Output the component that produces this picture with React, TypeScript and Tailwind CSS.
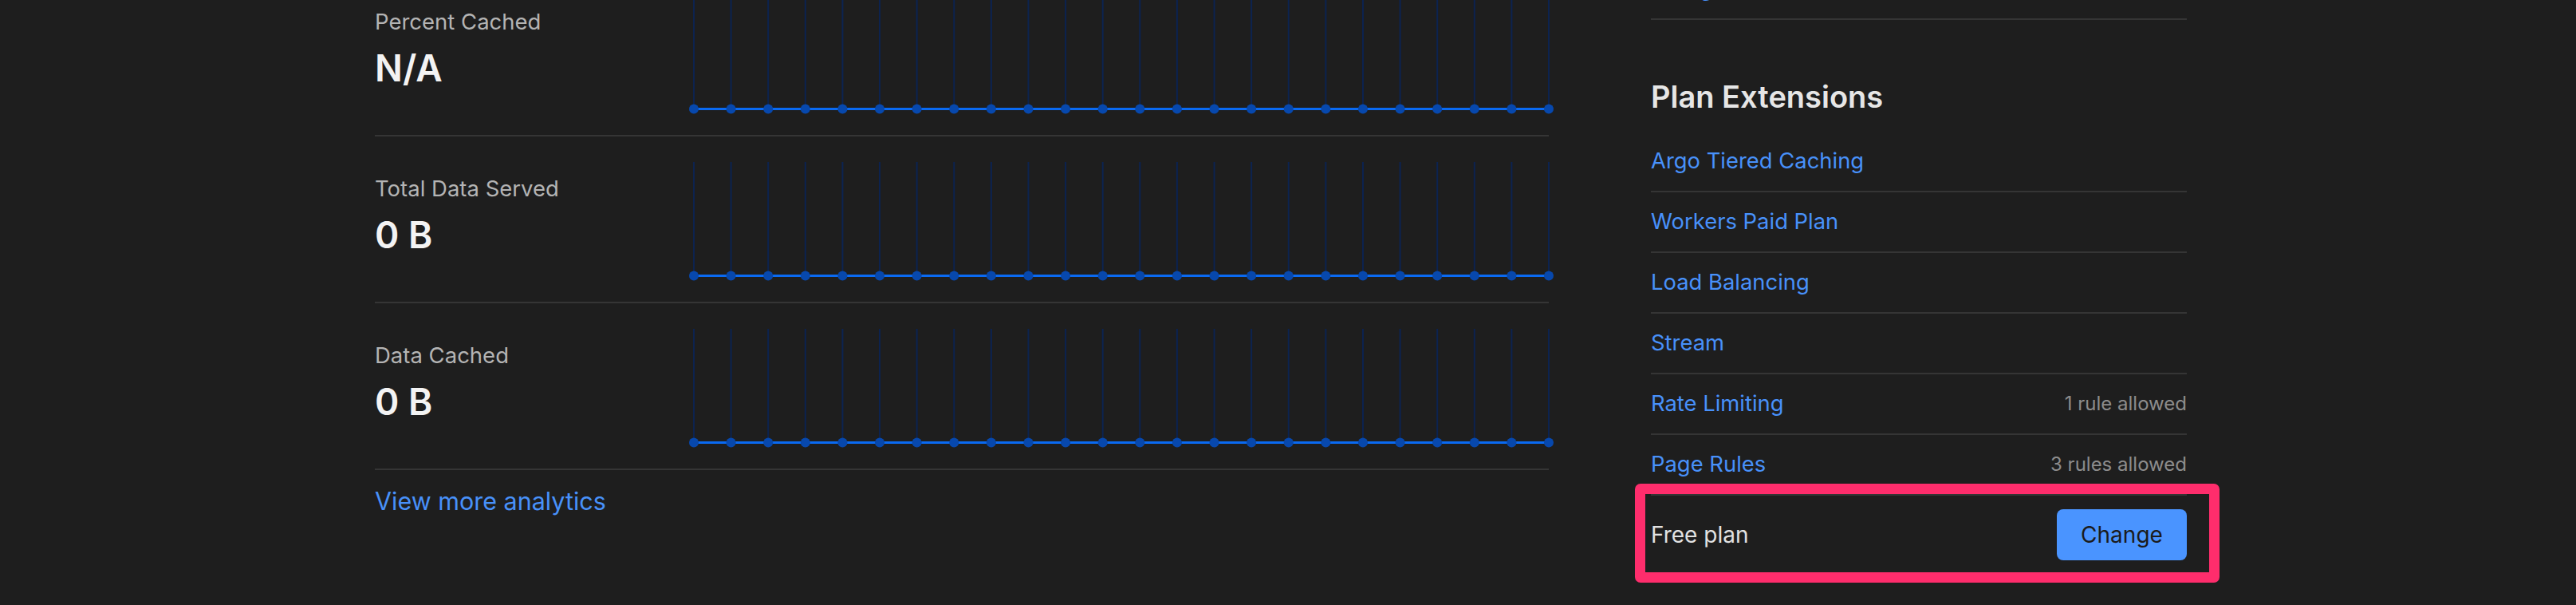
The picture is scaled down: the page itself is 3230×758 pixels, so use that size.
import React from "react";

const N = 24;
const CW = 1072;

function Chart() {
  const xs = Array.from({ length: N }, (_, i) => (i * CW) / (N - 1));
  return (
    <svg width={CW} height={150} className="block shrink-0 overflow-visible" style={{ overflow: "visible" }}>
      {xs.map((x, i) => (
        <line key={"v" + i} x1={x} y1={0} x2={x} y2={142.5} stroke="#0c2350" strokeWidth={2} />
      ))}
      <line x1={0} y1={142.5} x2={CW} y2={142.5} stroke="#0a6af2" strokeWidth={3} />
      {xs.map((x, i) => (
        <circle key={"d" + i} cx={x} cy={142.5} r={6} fill="#0748ad" />
      ))}
    </svg>
  );
}

function StatRow({ label, value }: { label: string; value: string }) {
  return (
    <div className="flex h-[209px] border-b-2 border-[#353535] pt-[32px]">
      <div className="w-[400px] shrink-0 pt-[13px]">
        <div className="text-[27.5px] leading-[40px] text-[#b4b4b4]">{label}</div>
        <div className="mt-[10px] text-[46px] leading-[56px] font-semibold text-[#f3f3f3]">{value}</div>
      </div>
      <Chart />
    </div>
  );
}

function LinkRow({ label, note }: { label: string; note?: string }) {
  return (
    <div className="flex h-[76px] items-center justify-between border-b-2 border-[#353535]">
      <span className="text-[27.4px] text-[#4891fa]">{label}</span>
      {note && <span className="text-[24px] text-[#8c8c8c]">{note}</span>}
    </div>
  );
}

export default function App() {
  return (
    <div className="w-[3230px] h-[758px] overflow-hidden bg-[#1e1e1e] font-['Inter',sans-serif]">
      <div className="flex gap-[128px] pl-[470px]">
        <div className="w-[1472px] shrink-0 -mt-[38px]">
          <StatRow label="Percent Cached" value="N/A" />
          <StatRow label="Total Data Served" value="0 B" />
          <StatRow label="Data Cached" value="0 B" />
          <div className="mt-[19px] text-[30.5px] leading-[40px] text-[#4891fa]">View more analytics</div>
        </div>
        <div className="w-[672px] shrink-0 -mt-[51px]">
          <LinkRow label="Billing" />
          <h2 className="mt-[72px] mb-[20px] text-[38px] leading-[48px] font-semibold text-[#e6e6e6]">Plan Extensions</h2>
          <LinkRow label="Argo Tiered Caching" />
          <LinkRow label="Workers Paid Plan" />
          <LinkRow label="Load Balancing" />
          <LinkRow label="Stream" />
          <LinkRow label="Rate Limiting" note="1 rule allowed" />
          <LinkRow label="Page Rules" note="3 rules allowed" />
          <div className="relative flex items-center justify-between py-[17px]">
            <span className="text-[28px] text-[#e2e2e2]">Free plan</span>
            <button className="h-[64px] w-[163px] rounded-[8px] bg-[#4a94ff] text-[28px] text-[#1b1b1b]">Change</button>
            <div className="pointer-events-none absolute -left-[20px] -right-[41px] -top-[15px] -bottom-[11px] rounded-[7px] border-[13px] border-[#fe2d6c]" />
          </div>
        </div>
      </div>
    </div>
  );
}
